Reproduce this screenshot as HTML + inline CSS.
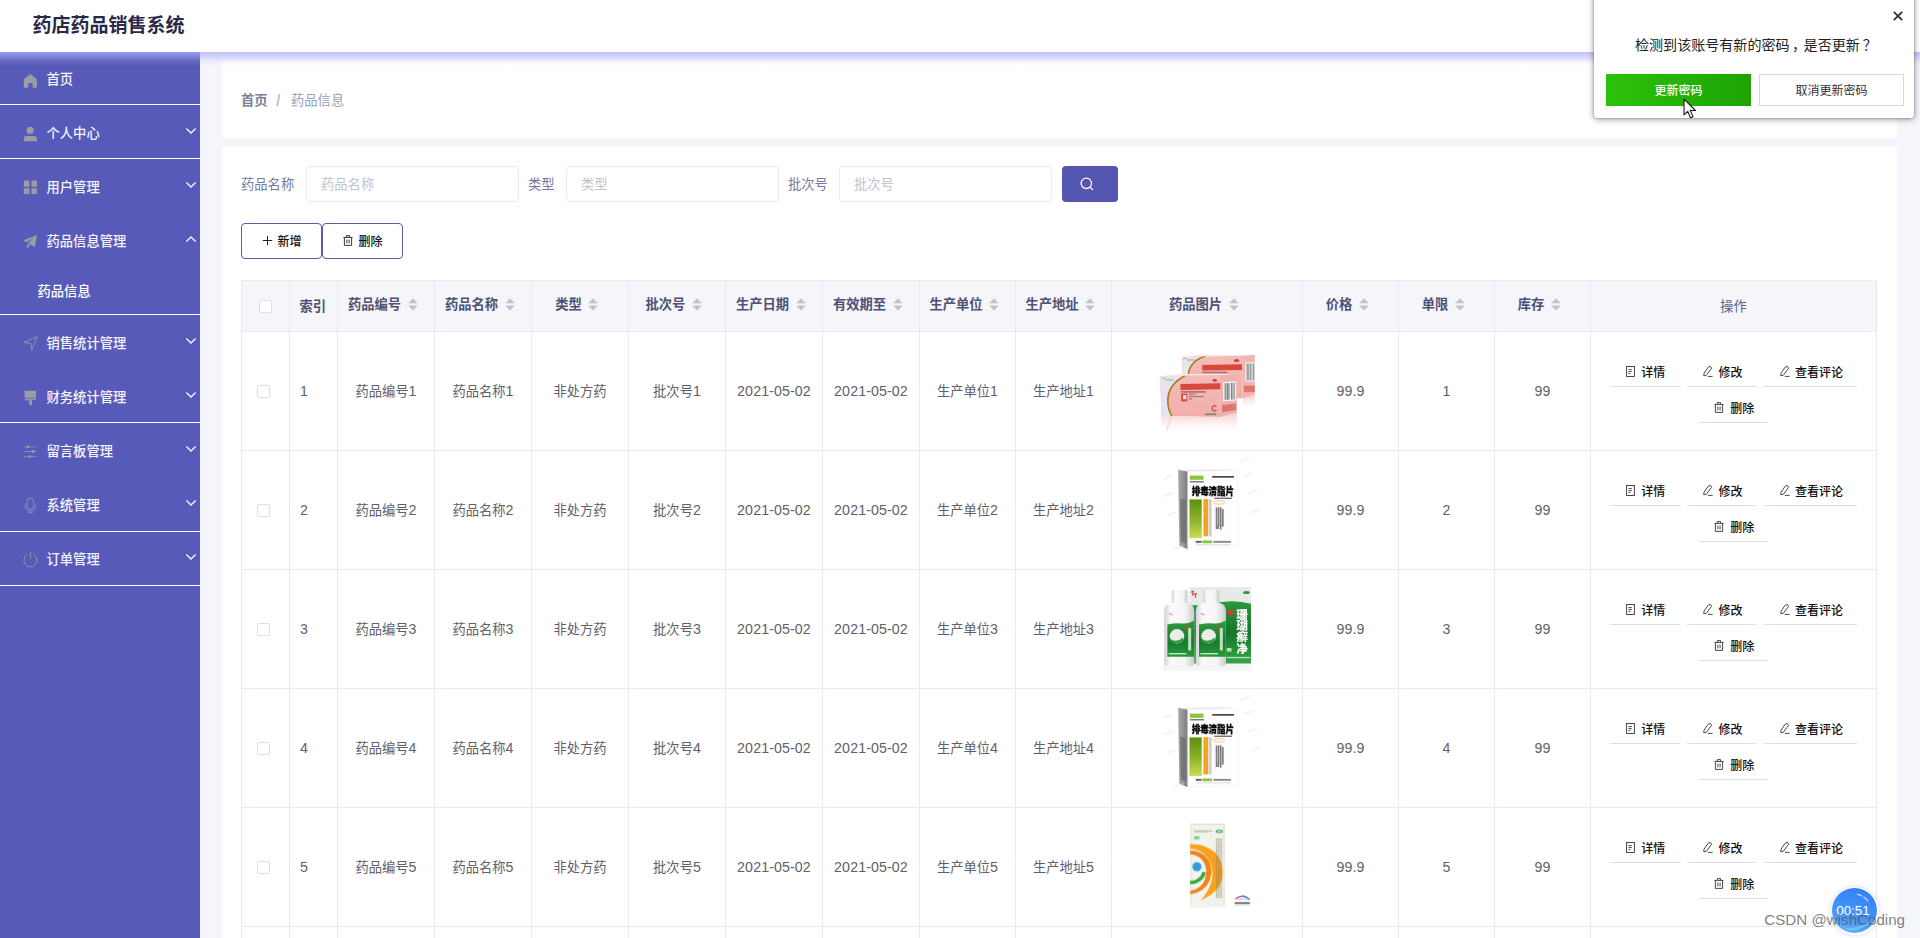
<!DOCTYPE html>
<html lang="zh-CN"><head><meta charset="utf-8"><title>药店药品销售系统</title><style>
*{box-sizing:border-box;margin:0;padding:0}
html,body{width:1920px;height:938px;overflow:hidden}
body{background:#f5f6fb;font-family:"Liberation Sans","Noto Sans CJK SC",sans-serif;font-size:13.3px;color:#606266;position:relative}
.abs{position:absolute}
.t{position:absolute;white-space:nowrap;line-height:20px;height:20px}
.c{transform:translateX(-50%)}
#header{left:0;top:0;width:1920px;height:52px;background:#fff;z-index:5}
#title{left:32.5px;top:10.7px;font-size:19px;font-weight:bold;color:#2a2a48;line-height:30px;height:30px;letter-spacing:0px}
#hshadow{left:0;top:52px;width:1920px;height:14px;z-index:6;background:linear-gradient(to bottom,rgba(176,176,252,.72) 0,rgba(176,176,252,.58) 3px,rgba(176,176,252,.38) 6px,rgba(176,176,252,.18) 9px,rgba(176,176,252,.05) 12px,rgba(176,176,252,0) 14px)}
#side{left:0;top:52px;width:200px;height:886px;background:#575ab8}
.mi{color:#f4f4fc;font-size:13.3px;font-weight:500}
.sl{left:0;width:200px;height:1px;background:#fff}
.card{background:#fff}
.inp{border:1px solid #e9e9f8;border-radius:4px;background:#fff;height:36px;width:213px}
.ph{color:#c0c4cc;font-size:13.3px}
.lab{color:#767aa0;font-size:13.3px}
.btn{border:1px solid #5c5c9e;border-radius:4px;background:#fff;height:36px}
.bt{color:#111;font-size:12px;font-weight:500}
.th{color:#4e5175;font-weight:bold;font-size:13.3px}
.td{color:#5f6166;font-size:13.3px}
.n{font-size:14.2px;letter-spacing:.12px;line-height:0}
.vl{width:1px;background:#e9e9f3}
.hl{height:1px;background:#e9e9f3}
.cb{width:13px;height:13px;border:1px solid #dcdfe6;border-radius:2px;background:#fff}
.ab{height:1px;background:#dcdfe6}
.at{color:#111;font-size:12px;font-weight:500}
svg{position:absolute;overflow:visible}
</style></head><body>
<header>
<div id="header" class="abs"><div id="title" class="t">药店药品销售系统</div></div>
<div id="hshadow" class="abs"></div>
</header>
<nav>
<div id="side" class="abs"></div>
<div class="abs sl" style="top:104px"></div>
<div class="abs sl" style="top:158px"></div>
<div class="abs sl" style="top:314px"></div>
<div class="abs sl" style="top:422px"></div>
<div class="abs sl" style="top:531px"></div>
<div class="abs sl" style="top:585px"></div>
<svg style="left:22px;top:69px" width="16" height="20" viewBox="0 0 16 20"><path d="M8.4 5.1 L14.9 10.3 V18.7 H10.6 V13.9 H6.3 V18.7 H1.8 V10.3 Z" fill="#9a9da3"/></svg>
<div class="t mi" style="left:46.5px;top:70px;">首页</div>
<svg style="left:22px;top:123px" width="16" height="20" viewBox="0 0 16 20"><circle cx="8.1" cy="7.3" r="3.6" fill="#9a9da3"/><path d="M1.8 18.2 V15.4 Q1.8 12.9 4.6 12.9 H12.1 Q14.9 12.9 14.9 15.4 V18.2 Z" fill="#9a9da3"/></svg>
<div class="t mi" style="left:46.5px;top:124px;">个人中心</div>
<svg style="left:185.9px;top:127.5px" width="10" height="7" viewBox="0 0 10 7"><path d="M0.4 0.5 L5 5.1 L9.6 0.5" fill="none" stroke="#f4f4fd" stroke-width="1.4"/></svg>
<svg style="left:22px;top:177px" width="16" height="20" viewBox="0 0 16 20"><g fill="#9a9da3"><rect x="1.8" y="3.6" width="5.6" height="6.1"/><rect x="9.5" y="3.6" width="5.4" height="6.1"/><rect x="1.8" y="11.3" width="5.6" height="5.8"/><rect x="9.5" y="11.3" width="5.4" height="5.8"/></g></svg>
<div class="t mi" style="left:46.5px;top:178px;">用户管理</div>
<svg style="left:185.9px;top:181.5px" width="10" height="7" viewBox="0 0 10 7"><path d="M0.4 0.5 L5 5.1 L9.6 0.5" fill="none" stroke="#f4f4fd" stroke-width="1.4"/></svg>
<svg style="left:22px;top:231px" width="16" height="20" viewBox="0 0 16 20"><path d="M14.9 4.1 L0.9 9.5 L4.8 11.3 L11.9 6.6 L5.9 12.2 L12.9 16 Z M5.1 13 L5.1 18 L8.1 14.6 Z" fill="#9a9da3"/></svg>
<div class="t mi" style="left:46.5px;top:232px;">药品信息管理</div>
<svg style="left:185.9px;top:235.8px" width="10" height="7" viewBox="0 0 10 7"><path d="M0.4 5.6 L5 1 L9.6 5.6" fill="none" stroke="#f4f4fd" stroke-width="1.4"/></svg>
<svg style="left:22px;top:333px" width="16" height="20" viewBox="0 0 16 20"><path d="M15.2 3.7 L1.9 9.4 L9 10.6 L9.7 17.2 Z" fill="none" stroke="#9a9da3" stroke-width="1" stroke-linejoin="round" opacity=".8"/></svg>
<div class="t mi" style="left:46.5px;top:334px;">销售统计管理</div>
<svg style="left:185.9px;top:337.5px" width="10" height="7" viewBox="0 0 10 7"><path d="M0.4 0.5 L5 5.1 L9.6 0.5" fill="none" stroke="#f4f4fd" stroke-width="1.4"/></svg>
<svg style="left:22px;top:387px" width="16" height="20" viewBox="0 0 16 20"><g fill="#9a9da3"><rect x="2.6" y="3.8" width="11.4" height="7"/><path d="M2.8 11.4 H13.8 L13.2 13.3 H3.4 Z"/><path d="M7.1 13.3 H10 V17.3 Q10 18.3 8.55 18.3 Q7.1 18.3 7.1 17.3 Z"/></g></svg>
<div class="t mi" style="left:46.5px;top:388px;">财务统计管理</div>
<svg style="left:185.9px;top:391.5px" width="10" height="7" viewBox="0 0 10 7"><path d="M0.4 0.5 L5 5.1 L9.6 0.5" fill="none" stroke="#f4f4fd" stroke-width="1.4"/></svg>
<svg style="left:22px;top:441px" width="16" height="20" viewBox="0 0 16 20"><g stroke="#9a9da3" stroke-width="1" opacity=".7"><path d="M2 5.9H14.9M2 10.5H14.9M2 15.6H14.9" fill="none"/></g><g fill="#9a9da3"><circle cx="5.7" cy="5.9" r="1.4"/><circle cx="10.9" cy="10.5" r="1.4"/><circle cx="7.8" cy="15.6" r="1.4"/></g></svg>
<div class="t mi" style="left:46.5px;top:442px;">留言板管理</div>
<svg style="left:185.9px;top:445.5px" width="10" height="7" viewBox="0 0 10 7"><path d="M0.4 0.5 L5 5.1 L9.6 0.5" fill="none" stroke="#f4f4fd" stroke-width="1.4"/></svg>
<svg style="left:22px;top:495px" width="16" height="20" viewBox="0 0 16 20"><g stroke="#9a9da3" stroke-width="1" fill="none" opacity=".8"><rect x="5" y="3.2" width="6.7" height="11" rx="3.35"/><path d="M3 10 Q3 15.8 8.4 15.8 Q13.8 15.8 13.8 10"/><path d="M8.4 15.8 V17.7 M5.8 17.7 H11"/></g></svg>
<div class="t mi" style="left:46.5px;top:496px;">系统管理</div>
<svg style="left:185.9px;top:499.5px" width="10" height="7" viewBox="0 0 10 7"><path d="M0.4 0.5 L5 5.1 L9.6 0.5" fill="none" stroke="#f4f4fd" stroke-width="1.4"/></svg>
<svg style="left:22px;top:549px" width="16" height="20" viewBox="0 0 16 20"><g stroke="#9a9da3" stroke-width="1" fill="none" opacity=".85"><path d="M8.7 3.2 V9.7"/><path d="M5.35 5.56 A6.5 6.5 0 1 0 11.45 5.56"/></g></svg>
<div class="t mi" style="left:46.5px;top:550px;">订单管理</div>
<svg style="left:185.9px;top:553.5px" width="10" height="7" viewBox="0 0 10 7"><path d="M0.4 0.5 L5 5.1 L9.6 0.5" fill="none" stroke="#f4f4fd" stroke-width="1.4"/></svg>
<div class="t mi" style="left:37.5px;top:282px;color:#fff">药品信息</div>
</nav>
<main>
<div class="abs card" style="left:222px;top:60px;width:1675px;height:78px"></div>
<div class="abs card" style="left:222px;top:147px;width:1675px;height:791px"></div>
<div class="t " style="left:241px;top:91px;color:#7b7f9d;font-weight:bold;font-size:13.3px">首页</div>
<div class="t " style="left:276px;top:91px;color:#bfc3d2;font-size:16px;font-weight:bold">/</div>
<div class="t " style="left:291px;top:91px;color:#9a9eb6;font-size:13.3px">药品信息</div>
<div class="t lab" style="left:241px;top:175px;">药品名称</div>
<div class="abs inp" style="left:306px;top:166px"></div>
<div class="t ph" style="left:321px;top:175px;">药品名称</div>
<div class="t lab" style="left:528px;top:175px;">类型</div>
<div class="abs inp" style="left:566px;top:166px"></div>
<div class="t ph" style="left:581px;top:175px;">类型</div>
<div class="t lab" style="left:788px;top:175px;">批次号</div>
<div class="abs inp" style="left:839px;top:166px"></div>
<div class="t ph" style="left:854px;top:175px;">批次号</div>
<div class="abs" style="left:1062px;top:166px;width:56px;height:36px;border-radius:4px;background:#5457b2"></div>
<svg style="left:1080px;top:177px" width="14" height="14" viewBox="0 0 14 14"><circle cx="6.3" cy="6.3" r="5.2" fill="none" stroke="#fff" stroke-width="1.3"/><path d="M10 10 L12.6 12.6" stroke="#fff" stroke-width="1.3" stroke-linecap="round"/></svg>
<div class="abs btn" style="left:241px;top:223px;width:81px"></div>
<div class="abs btn" style="left:322px;top:223px;width:81px"></div>
<svg style="left:262px;top:235px" width="11" height="11" viewBox="0 0 11 11"><path d="M5.5 0.8V10.2M0.8 5.5H10.2" stroke="#222" stroke-width="1"/></svg>
<div class="t bt" style="left:277.5px;top:231.5px;">新增</div>
<svg style="left:343px;top:235px" width="10" height="11" viewBox="0 0 10 11"><g fill="none" stroke="#222" stroke-width="0.9"><path d="M0.4 2.4H9.6M3.4 2.2V0.6H6.6V2.2M1.4 2.6V10.4H8.6V2.6M3.9 4.6V8.4M6.1 4.6V8.4"/></g></svg>
<div class="t bt" style="left:358.5px;top:231.5px;">删除</div>
<div class="abs" style="left:241px;top:280px;width:1636px;height:51px;background:#f5f5fa"></div>
<div class="abs vl" style="left:241px;top:280px;height:658px"></div>
<div class="abs vl" style="left:289px;top:280px;height:658px"></div>
<div class="abs vl" style="left:337px;top:280px;height:658px"></div>
<div class="abs vl" style="left:434px;top:280px;height:658px"></div>
<div class="abs vl" style="left:531px;top:280px;height:658px"></div>
<div class="abs vl" style="left:628px;top:280px;height:658px"></div>
<div class="abs vl" style="left:725px;top:280px;height:658px"></div>
<div class="abs vl" style="left:822px;top:280px;height:658px"></div>
<div class="abs vl" style="left:919px;top:280px;height:658px"></div>
<div class="abs vl" style="left:1015px;top:280px;height:658px"></div>
<div class="abs vl" style="left:1111px;top:280px;height:658px"></div>
<div class="abs vl" style="left:1302px;top:280px;height:658px"></div>
<div class="abs vl" style="left:1398px;top:280px;height:658px"></div>
<div class="abs vl" style="left:1494px;top:280px;height:658px"></div>
<div class="abs vl" style="left:1590px;top:280px;height:658px"></div>
<div class="abs vl" style="left:1876px;top:280px;height:658px"></div>
<div class="abs hl" style="left:241px;top:280px;width:1636px"></div>
<div class="abs hl" style="left:241px;top:331px;width:1636px"></div>
<div class="abs hl" style="left:241px;top:450px;width:1636px"></div>
<div class="abs hl" style="left:241px;top:569px;width:1636px"></div>
<div class="abs hl" style="left:241px;top:688px;width:1636px"></div>
<div class="abs hl" style="left:241px;top:807px;width:1636px"></div>
<div class="abs hl" style="left:241px;top:926px;width:1636px"></div>
<div class="abs cb" style="left:259px;top:299.7px"></div>
<div class="t th" style="left:299.5px;top:297.3px;">索引</div>
<div class="t th" style="left:347.9px;top:295.3px;">药品编号</div>
<svg style="left:407.6px;top:298.4px" width="10" height="13" viewBox="0 0 10 13"><path d="M5 0.2 L9.8 5.2 H0.2 Z M0.2 7.4 H9.8 L5 12.4 Z" fill="#c0c4cc"/></svg>
<div class="t th" style="left:444.9px;top:295.3px;">药品名称</div>
<svg style="left:504.6px;top:298.4px" width="10" height="13" viewBox="0 0 10 13"><path d="M5 0.2 L9.8 5.2 H0.2 Z M0.2 7.4 H9.8 L5 12.4 Z" fill="#c0c4cc"/></svg>
<div class="t th" style="left:555.2px;top:295.3px;">类型</div>
<svg style="left:588.3px;top:298.4px" width="10" height="13" viewBox="0 0 10 13"><path d="M5 0.2 L9.8 5.2 H0.2 Z M0.2 7.4 H9.8 L5 12.4 Z" fill="#c0c4cc"/></svg>
<div class="t th" style="left:645.5px;top:295.3px;">批次号</div>
<svg style="left:691.9px;top:298.4px" width="10" height="13" viewBox="0 0 10 13"><path d="M5 0.2 L9.8 5.2 H0.2 Z M0.2 7.4 H9.8 L5 12.4 Z" fill="#c0c4cc"/></svg>
<div class="t th" style="left:735.9px;top:295.3px;">生产日期</div>
<svg style="left:795.6px;top:298.4px" width="10" height="13" viewBox="0 0 10 13"><path d="M5 0.2 L9.8 5.2 H0.2 Z M0.2 7.4 H9.8 L5 12.4 Z" fill="#c0c4cc"/></svg>
<div class="t th" style="left:832.9px;top:295.3px;">有效期至</div>
<svg style="left:892.6px;top:298.4px" width="10" height="13" viewBox="0 0 10 13"><path d="M5 0.2 L9.8 5.2 H0.2 Z M0.2 7.4 H9.8 L5 12.4 Z" fill="#c0c4cc"/></svg>
<div class="t th" style="left:929.4px;top:295.3px;">生产单位</div>
<svg style="left:989.1px;top:298.4px" width="10" height="13" viewBox="0 0 10 13"><path d="M5 0.2 L9.8 5.2 H0.2 Z M0.2 7.4 H9.8 L5 12.4 Z" fill="#c0c4cc"/></svg>
<div class="t th" style="left:1025.4px;top:295.3px;">生产地址</div>
<svg style="left:1085.1px;top:298.4px" width="10" height="13" viewBox="0 0 10 13"><path d="M5 0.2 L9.8 5.2 H0.2 Z M0.2 7.4 H9.8 L5 12.4 Z" fill="#c0c4cc"/></svg>
<div class="t th" style="left:1168.9px;top:295.3px;">药品图片</div>
<svg style="left:1228.6px;top:298.4px" width="10" height="13" viewBox="0 0 10 13"><path d="M5 0.2 L9.8 5.2 H0.2 Z M0.2 7.4 H9.8 L5 12.4 Z" fill="#c0c4cc"/></svg>
<div class="t th" style="left:1325.7px;top:295.3px;">价格</div>
<svg style="left:1358.8px;top:298.4px" width="10" height="13" viewBox="0 0 10 13"><path d="M5 0.2 L9.8 5.2 H0.2 Z M0.2 7.4 H9.8 L5 12.4 Z" fill="#c0c4cc"/></svg>
<div class="t th" style="left:1421.7px;top:295.3px;">单限</div>
<svg style="left:1454.8px;top:298.4px" width="10" height="13" viewBox="0 0 10 13"><path d="M5 0.2 L9.8 5.2 H0.2 Z M0.2 7.4 H9.8 L5 12.4 Z" fill="#c0c4cc"/></svg>
<div class="t th" style="left:1517.7px;top:295.3px;">库存</div>
<svg style="left:1550.8px;top:298.4px" width="10" height="13" viewBox="0 0 10 13"><path d="M5 0.2 L9.8 5.2 H0.2 Z M0.2 7.4 H9.8 L5 12.4 Z" fill="#c0c4cc"/></svg>
<div class="t th c" style="left:1733.5px;top:296.5px;font-weight:normal;color:#5a5f88">操作</div>
<div class="abs cb" style="left:257px;top:385.25px"></div>
<div class="t td" style="left:300px;top:381.75px;"><span class="n">1</span></div>
<div class="t td c" style="left:386.0px;top:381.75px;">药品编号<span class="n">1</span></div>
<div class="t td c" style="left:483.0px;top:381.75px;">药品名称<span class="n">1</span></div>
<div class="t td c" style="left:580.0px;top:381.75px;">非处方药</div>
<div class="t td c" style="left:677.0px;top:381.75px;">批次号<span class="n">1</span></div>
<div class="t td c" style="left:774.0px;top:381.75px;"><span class="n">2021-05-02</span></div>
<div class="t td c" style="left:871.0px;top:381.75px;"><span class="n">2021-05-02</span></div>
<div class="t td c" style="left:967.5px;top:381.75px;">生产单位<span class="n">1</span></div>
<div class="t td c" style="left:1063.5px;top:381.75px;">生产地址<span class="n">1</span></div>
<div class="t td c" style="left:1350.5px;top:381.75px;"><span class="n">99.9</span></div>
<div class="t td c" style="left:1446.5px;top:381.75px;"><span class="n">1</span></div>
<div class="t td c" style="left:1542.5px;top:381.75px;"><span class="n">99</span></div>
<div class="abs ab" style="left:1610px;top:386.0px;width:70px"></div>
<div class="abs ab" style="left:1687px;top:386.0px;width:69px"></div>
<div class="abs ab" style="left:1764px;top:386.0px;width:93px"></div>
<div class="abs ab" style="left:1699px;top:422.0px;width:69px"></div>
<svg style="left:1625.6px;top:366.25px" width="10" height="11" viewBox="0 0 10 11"><g fill="none" stroke="#333" stroke-width="0.9"><rect x="0.6" y="0.5" width="7.8" height="10"/><path d="M2.4 3.6H5.8M2.4 5.6H5.8M2.4 7.6H4.4"/></g></svg>
<div class="t at" style="left:1641.3px;top:362.75px;">详情</div>
<svg style="left:1702.6px;top:366.25px" width="10" height="11" viewBox="0 0 10 11"><g fill="none" stroke="#333" stroke-width="0.9"><path d="M5.2 1.2 L7.4 0.4 L8.6 2.2 L3.4 9.2 L0.8 9.8 L1 7.2 Z"/><path d="M4.8 10.4H9.6"/></g></svg>
<div class="t at" style="left:1718.5px;top:362.75px;">修改</div>
<svg style="left:1779.6px;top:366.25px" width="10" height="11" viewBox="0 0 10 11"><g fill="none" stroke="#333" stroke-width="0.9"><path d="M5.2 1.2 L7.4 0.4 L8.6 2.2 L3.4 9.2 L0.8 9.8 L1 7.2 Z"/><path d="M4.8 10.4H9.6"/></g></svg>
<div class="t at" style="left:1795px;top:362.75px;">查看评论</div>
<svg style="left:1714px;top:402.45px" width="10" height="11" viewBox="0 0 10 11"><g fill="none" stroke="#333" stroke-width="0.9"><path d="M0.4 2.4H9.6M3.4 2.2V0.6H6.6V2.2M1.4 2.6V10.4H8.6V2.6M3.9 4.6V8.4M6.1 4.6V8.4"/></g></svg>
<div class="t at" style="left:1730.2px;top:398.95px;">删除</div>
<svg style="left:1150px;top:335px" width="120" height="110" viewBox="0 0 1023 938"><defs><filter id="b1" x="-5%" y="-5%" width="110%" height="110%"><feGaussianBlur stdDeviation="3.2"/></filter><linearGradient id="pk1" x1="0" y1="0" x2="0" y2="1"><stop offset="0" stop-color="#f4bdb8"/><stop offset="1" stop-color="#f0aeaa"/></linearGradient><linearGradient id="rf1" x1="0" y1="0" x2="0" y2="1"><stop offset="0" stop-color="#f3c0bc" stop-opacity=".8"/><stop offset="1" stop-color="#fff" stop-opacity="0"/></linearGradient><clipPath id="cb1"><polygon points="275,185 785,178 790,540 280,530"/></clipPath><clipPath id="cf1"><polygon points="88,350 600,343 606,700 96,690"/></clipPath></defs><g filter="url(#b1)"><polygon points="275,185 420,168 893,170 785,180" fill="#f7e9ea"/><polygon points="275,185 785,178 790,540 280,530" fill="url(#pk1)"/><g clip-path="url(#cb1)"><path d="M275,185 L470,180 Q330,220 322,345 L275,345 Z" fill="#e9e5ef"/><path d="M470,181 Q335,222 326,345" fill="none" stroke="#a0821c" stroke-width="13"/></g><polygon points="785,178 893,171 893,512 790,540" fill="#efb3b0"/><polygon points="445,256 785,250 785,298 445,302" fill="#d8493c"/><rect x="445" y="312" width="215" height="14" fill="#8a5a60" opacity=".7"/><ellipse cx="738" cy="217" rx="24" ry="13" fill="#d93a3a"/><path d="M285,205 q12,-18 24,0 m6,8 h70" stroke="#7d8b52" stroke-width="6" fill="none"/><rect x="812" y="233" width="82" height="165" fill="#f2f2f2"/><rect x="824" y="243" width="9" height="145" fill="#7f8288"/><rect x="838" y="243" width="6" height="145" fill="#7f8288"/><rect x="850" y="243" width="9" height="145" fill="#7f8288"/><rect x="866" y="243" width="6" height="145" fill="#7f8288"/><rect x="880" y="243" width="9" height="145" fill="#7f8288"/><rect x="800" y="432" width="93" height="55" fill="#d9685c" opacity=".8"/><polygon points="88,350 235,332 740,335 600,343" fill="#f8ecec"/><polygon points="88,350 600,343 606,700 96,690" fill="url(#pk1)"/><g clip-path="url(#cf1)"><path d="M88,350 L300,346 Q150,420 150,560 Q150,640 190,700 L90,700 Z" fill="#e6e3ee"/><path d="M300,347 Q152,420 152,560 Q152,640 190,698" fill="none" stroke="#a0821c" stroke-width="14"/></g><polygon points="600,343 740,335 740,662 606,700" fill="#efb1ae"/><polygon points="260,417 600,411 600,463 260,468" fill="#d8493c"/><rect x="262" y="478" width="215" height="14" fill="#8a5a60" opacity=".75"/><rect x="265" y="500" width="53" height="66" fill="#d9483a"/><rect x="282" y="512" width="28" height="36" fill="#f8dcd8"/><rect x="330" y="500" width="60" height="10" fill="#8a5a60" opacity=".7"/><rect x="330" y="520" width="130" height="10" fill="#8a5a60" opacity=".7"/><rect x="330" y="540" width="30" height="10" fill="#8a5a60" opacity=".7"/><ellipse cx="552" cy="387" rx="20" ry="11" fill="#d93a3a"/><path d="M108,375 q12,-18 24,0 m6,8 h62" stroke="#7d8b52" stroke-width="6" fill="none"/><path d="M565,612 a20,22 0 1 0 0,26" fill="none" stroke="#d8493c" stroke-width="11"/><rect x="470" y="668" width="95" height="16" fill="#6f7a55" opacity=".8"/><rect x="622" y="400" width="112" height="165" fill="#f2f2f2" transform="skewY(-3) translate(0,33)"/><rect x="636" y="412" width="10" height="142" fill="#7f8288" transform="skewY(-3) translate(0,33)"/><rect x="652" y="412" width="14" height="142" fill="#7f8288" transform="skewY(-3) translate(0,33)"/><rect x="668" y="412" width="10" height="142" fill="#7f8288" transform="skewY(-3) translate(0,33)"/><rect x="690" y="412" width="14" height="142" fill="#7f8288" transform="skewY(-3) translate(0,33)"/><rect x="712" y="412" width="10" height="142" fill="#7f8288" transform="skewY(-3) translate(0,33)"/><polygon points="614,600 735,585 735,640 616,660" fill="#d9685c" opacity=".8"/><polygon points="96,692 606,702 740,664 740,800 606,850 100,840" fill="url(#rf1)"/><polygon points="790,542 893,514 893,600 790,640" fill="url(#rf1)"/><path d="M188,700 Q150,760 140,820" stroke="#b59a3a" stroke-width="9" fill="none" opacity=".3"/></g></svg>
<div class="abs cb" style="left:257px;top:504.25px"></div>
<div class="t td" style="left:300px;top:500.75px;"><span class="n">2</span></div>
<div class="t td c" style="left:386.0px;top:500.75px;">药品编号<span class="n">2</span></div>
<div class="t td c" style="left:483.0px;top:500.75px;">药品名称<span class="n">2</span></div>
<div class="t td c" style="left:580.0px;top:500.75px;">非处方药</div>
<div class="t td c" style="left:677.0px;top:500.75px;">批次号<span class="n">2</span></div>
<div class="t td c" style="left:774.0px;top:500.75px;"><span class="n">2021-05-02</span></div>
<div class="t td c" style="left:871.0px;top:500.75px;"><span class="n">2021-05-02</span></div>
<div class="t td c" style="left:967.5px;top:500.75px;">生产单位<span class="n">2</span></div>
<div class="t td c" style="left:1063.5px;top:500.75px;">生产地址<span class="n">2</span></div>
<div class="t td c" style="left:1350.5px;top:500.75px;"><span class="n">99.9</span></div>
<div class="t td c" style="left:1446.5px;top:500.75px;"><span class="n">2</span></div>
<div class="t td c" style="left:1542.5px;top:500.75px;"><span class="n">99</span></div>
<div class="abs ab" style="left:1610px;top:505.0px;width:70px"></div>
<div class="abs ab" style="left:1687px;top:505.0px;width:69px"></div>
<div class="abs ab" style="left:1764px;top:505.0px;width:93px"></div>
<div class="abs ab" style="left:1699px;top:541.0px;width:69px"></div>
<svg style="left:1625.6px;top:485.25px" width="10" height="11" viewBox="0 0 10 11"><g fill="none" stroke="#333" stroke-width="0.9"><rect x="0.6" y="0.5" width="7.8" height="10"/><path d="M2.4 3.6H5.8M2.4 5.6H5.8M2.4 7.6H4.4"/></g></svg>
<div class="t at" style="left:1641.3px;top:481.75px;">详情</div>
<svg style="left:1702.6px;top:485.25px" width="10" height="11" viewBox="0 0 10 11"><g fill="none" stroke="#333" stroke-width="0.9"><path d="M5.2 1.2 L7.4 0.4 L8.6 2.2 L3.4 9.2 L0.8 9.8 L1 7.2 Z"/><path d="M4.8 10.4H9.6"/></g></svg>
<div class="t at" style="left:1718.5px;top:481.75px;">修改</div>
<svg style="left:1779.6px;top:485.25px" width="10" height="11" viewBox="0 0 10 11"><g fill="none" stroke="#333" stroke-width="0.9"><path d="M5.2 1.2 L7.4 0.4 L8.6 2.2 L3.4 9.2 L0.8 9.8 L1 7.2 Z"/><path d="M4.8 10.4H9.6"/></g></svg>
<div class="t at" style="left:1795px;top:481.75px;">查看评论</div>
<svg style="left:1714px;top:521.45px" width="10" height="11" viewBox="0 0 10 11"><g fill="none" stroke="#333" stroke-width="0.9"><path d="M0.4 2.4H9.6M3.4 2.2V0.6H6.6V2.2M1.4 2.6V10.4H8.6V2.6M3.9 4.6V8.4M6.1 4.6V8.4"/></g></svg>
<div class="t at" style="left:1730.2px;top:517.95px;">删除</div>
<svg style="left:1150px;top:454px" width="120" height="110" viewBox="0 0 1023 938"><defs><filter id="b2" x="-5%" y="-5%" width="110%" height="110%"><feGaussianBlur stdDeviation="3.2"/></filter><linearGradient id="gr2" x1="0" y1="0" x2="0" y2="1"><stop offset="0" stop-color="#5d8e17"/><stop offset=".55" stop-color="#8db52a"/><stop offset="1" stop-color="#cddb52"/></linearGradient><linearGradient id="sd2" x1="0" y1="0" x2="1" y2="0"><stop offset="0" stop-color="#a9a9a9"/><stop offset="1" stop-color="#7d7d7d"/></linearGradient></defs><g filter="url(#b2)"><polygon points="240,135 322,150 322,812 250,782" fill="url(#sd2)"/><polygon points="258,380 305,392 305,760 262,745" fill="#5e5e5e" opacity=".55"/><polygon points="240,135 322,150 745,140 660,128" fill="#ededed"/><polygon points="322,150 745,140 750,790 322,812" fill="#fefefe" stroke="#e6e6e6" stroke-width="3"/><rect x="340" y="184" width="116" height="36" fill="#8bc53f"/><rect x="340" y="232" width="120" height="10" fill="#333" opacity=".8"/><rect x="530" y="189" width="186" height="12" fill="#222"/><text x="355" y="348" font-family="'Liberation Sans','Noto Sans CJK SC',sans-serif" font-weight="900" font-size="84" textLength="362" lengthAdjust="spacingAndGlyphs" fill="#111" stroke="#111" stroke-width="2.5">排毒清脂片</text><rect x="548" y="372" width="150" height="11" fill="#333" opacity=".75"/><rect x="332" y="383" width="112" height="335" fill="#f2ee7a"/><rect x="338" y="388" width="102" height="327" fill="url(#gr2)"/><rect x="455" y="385" width="41" height="317" fill="#f5a31b"/><rect x="500" y="385" width="26" height="317" fill="#cfcfd2"/><rect x="546" y="400" width="86" height="26" rx="8" fill="#fff" stroke="#f0a63a" stroke-width="5"/><rect x="560" y="455" width="14" height="185" fill="#444" opacity=".7"/><rect x="578" y="455" width="14" height="160" fill="#444" opacity=".7"/><rect x="596" y="455" width="14" height="190" fill="#444" opacity=".7"/><rect x="614" y="470" width="14" height="150" fill="#444" opacity=".7"/><rect x="575" y="610" width="14" height="30" fill="#444" opacity=".7"/><rect x="390" y="741" width="50" height="16" fill="#333" opacity=".8"/><rect x="447" y="737" width="82" height="24" fill="#8bc53f"/><rect x="540" y="741" width="150" height="16" fill="#555" opacity=".7"/><rect x="390" y="772" width="300" height="6" fill="#9aa" opacity=".6"/><rect x="100" y="210" width="90" height="22" fill="#dcdcdc" opacity=".28" transform="rotate(-20 100 210)"/><rect x="120" y="350" width="90" height="22" fill="#dcdcdc" opacity=".28" transform="rotate(-20 120 350)"/><rect x="150" y="510" width="90" height="22" fill="#dcdcdc" opacity=".28" transform="rotate(-20 150 510)"/><rect x="200" y="800" width="90" height="22" fill="#dcdcdc" opacity=".28" transform="rotate(-20 200 800)"/><rect x="760" y="60" width="90" height="22" fill="#dcdcdc" opacity=".28" transform="rotate(-20 760 60)"/><rect x="790" y="180" width="90" height="22" fill="#dcdcdc" opacity=".28" transform="rotate(-20 790 180)"/><rect x="830" y="330" width="90" height="22" fill="#dcdcdc" opacity=".28" transform="rotate(-20 830 330)"/><rect x="860" y="490" width="90" height="22" fill="#dcdcdc" opacity=".28" transform="rotate(-20 860 490)"/></g></svg>
<div class="abs cb" style="left:257px;top:623.25px"></div>
<div class="t td" style="left:300px;top:619.75px;"><span class="n">3</span></div>
<div class="t td c" style="left:386.0px;top:619.75px;">药品编号<span class="n">3</span></div>
<div class="t td c" style="left:483.0px;top:619.75px;">药品名称<span class="n">3</span></div>
<div class="t td c" style="left:580.0px;top:619.75px;">非处方药</div>
<div class="t td c" style="left:677.0px;top:619.75px;">批次号<span class="n">3</span></div>
<div class="t td c" style="left:774.0px;top:619.75px;"><span class="n">2021-05-02</span></div>
<div class="t td c" style="left:871.0px;top:619.75px;"><span class="n">2021-05-02</span></div>
<div class="t td c" style="left:967.5px;top:619.75px;">生产单位<span class="n">3</span></div>
<div class="t td c" style="left:1063.5px;top:619.75px;">生产地址<span class="n">3</span></div>
<div class="t td c" style="left:1350.5px;top:619.75px;"><span class="n">99.9</span></div>
<div class="t td c" style="left:1446.5px;top:619.75px;"><span class="n">3</span></div>
<div class="t td c" style="left:1542.5px;top:619.75px;"><span class="n">99</span></div>
<div class="abs ab" style="left:1610px;top:624.0px;width:70px"></div>
<div class="abs ab" style="left:1687px;top:624.0px;width:69px"></div>
<div class="abs ab" style="left:1764px;top:624.0px;width:93px"></div>
<div class="abs ab" style="left:1699px;top:660.0px;width:69px"></div>
<svg style="left:1625.6px;top:604.25px" width="10" height="11" viewBox="0 0 10 11"><g fill="none" stroke="#333" stroke-width="0.9"><rect x="0.6" y="0.5" width="7.8" height="10"/><path d="M2.4 3.6H5.8M2.4 5.6H5.8M2.4 7.6H4.4"/></g></svg>
<div class="t at" style="left:1641.3px;top:600.75px;">详情</div>
<svg style="left:1702.6px;top:604.25px" width="10" height="11" viewBox="0 0 10 11"><g fill="none" stroke="#333" stroke-width="0.9"><path d="M5.2 1.2 L7.4 0.4 L8.6 2.2 L3.4 9.2 L0.8 9.8 L1 7.2 Z"/><path d="M4.8 10.4H9.6"/></g></svg>
<div class="t at" style="left:1718.5px;top:600.75px;">修改</div>
<svg style="left:1779.6px;top:604.25px" width="10" height="11" viewBox="0 0 10 11"><g fill="none" stroke="#333" stroke-width="0.9"><path d="M5.2 1.2 L7.4 0.4 L8.6 2.2 L3.4 9.2 L0.8 9.8 L1 7.2 Z"/><path d="M4.8 10.4H9.6"/></g></svg>
<div class="t at" style="left:1795px;top:600.75px;">查看评论</div>
<svg style="left:1714px;top:640.45px" width="10" height="11" viewBox="0 0 10 11"><g fill="none" stroke="#333" stroke-width="0.9"><path d="M0.4 2.4H9.6M3.4 2.2V0.6H6.6V2.2M1.4 2.6V10.4H8.6V2.6M3.9 4.6V8.4M6.1 4.6V8.4"/></g></svg>
<div class="t at" style="left:1730.2px;top:636.95px;">删除</div>
<svg style="left:1150px;top:573px" width="120" height="110" viewBox="0 0 1023 938"><defs><filter id="b3" x="-5%" y="-5%" width="110%" height="110%"><feGaussianBlur stdDeviation="3.2"/></filter><linearGradient id="gb3" x1="0" y1="0" x2="0" y2="1"><stop offset="0" stop-color="#2d9a3c"/><stop offset=".5" stop-color="#13762a"/><stop offset="1" stop-color="#36a544"/></linearGradient><linearGradient id="bt3" x1="0" y1="0" x2="1" y2="0"><stop offset="0" stop-color="#cfd1d3"/><stop offset=".22" stop-color="#fafafa"/><stop offset=".7" stop-color="#f4f4f4"/><stop offset="1" stop-color="#c9cbcd"/></linearGradient><linearGradient id="lb3" x1="0" y1="0" x2="0" y2="1"><stop offset="0" stop-color="#2f9d3e"/><stop offset=".6" stop-color="#167c2c"/><stop offset="1" stop-color="#2a9a3c"/></linearGradient></defs><g filter="url(#b3)"><rect x="110" y="778" width="760" height="55" fill="#ececec" opacity=".55"/><rect x="335" y="120" width="526" height="652" fill="#e8eae7"/><path d="M335,270 Q420,285 520,262 T700,240 T861,262 V772 H335 Z" fill="url(#gb3)"/><ellipse cx="822" cy="167" rx="29" ry="13" fill="#2f9a4a"/><path d="M348,165 l22,-8 l-6,30 l30,-12 l-10,38" stroke="#d63a3a" stroke-width="9" fill="none"/><rect x="665" y="315" width="52" height="42" fill="#d23b35"/><text transform="translate(738,388)" font-family="'Liberation Sans','Noto Sans CJK SC',sans-serif" font-weight="bold" font-size="96" fill="#fff" stroke="#fff" stroke-width="2"><tspan x="0" y="0">珊</tspan><tspan x="0" y="98">瑚</tspan><tspan x="0" y="196">癣</tspan><tspan x="0" y="294">净</tspan></text><rect x="650" y="320" width="0" height="0"/><rect x="655" y="640" width="40" height="30" fill="#e8f3e8" opacity=".8"/><rect x="655" y="715" width="200" height="12" fill="#e8f3e8" opacity=".75"/><rect x="185" y="145" width="136" height="135" rx="10" fill="url(#bt3)"/><path d="M120,330 Q120,262 180,255 H320 Q378,262 378,330 V760 Q378,792 350,792 H150 Q120,792 120,760 Z" fill="url(#bt3)"/><path d="M148,440 Q210,425 270,430 T376,405 V715 H148 Z" fill="url(#lb3)"/><circle cx="230" cy="540" r="62" fill="#e9efe6"/><path d="M172,560 q50,40 110,-10 v30 q-50,40 -110,5 Z" fill="#3c9a46"/><rect x="290" y="455" width="24" height="24" fill="#c0483c"/><rect x="325" y="470" width="26" height="190" fill="#e9f5e9" opacity=".8"/><rect x="160" y="682" width="150" height="12" fill="#e6f2e6" opacity=".85"/><path d="M162,340 l10,14 l8,-10 l10,20" stroke="#d96a78" stroke-width="6" fill="none"/><rect x="455" y="145" width="136" height="135" rx="10" fill="url(#bt3)"/><path d="M390,330 Q390,262 450,255 H590 Q648,262 648,330 V760 Q648,792 620,792 H420 Q390,792 390,760 Z" fill="url(#bt3)"/><path d="M418,440 Q480,425 540,430 T646,405 V715 H418 Z" fill="url(#lb3)"/><circle cx="500" cy="540" r="62" fill="#e9efe6"/><path d="M442,560 q50,40 110,-10 v30 q-50,40 -110,5 Z" fill="#3c9a46"/><rect x="560" y="455" width="24" height="24" fill="#c0483c"/><rect x="595" y="470" width="26" height="190" fill="#e9f5e9" opacity=".8"/><rect x="430" y="682" width="150" height="12" fill="#e6f2e6" opacity=".85"/><path d="M432,340 l10,14 l8,-10 l10,20" stroke="#d96a78" stroke-width="6" fill="none"/></g></svg>
<div class="abs cb" style="left:257px;top:742.25px"></div>
<div class="t td" style="left:300px;top:738.75px;"><span class="n">4</span></div>
<div class="t td c" style="left:386.0px;top:738.75px;">药品编号<span class="n">4</span></div>
<div class="t td c" style="left:483.0px;top:738.75px;">药品名称<span class="n">4</span></div>
<div class="t td c" style="left:580.0px;top:738.75px;">非处方药</div>
<div class="t td c" style="left:677.0px;top:738.75px;">批次号<span class="n">4</span></div>
<div class="t td c" style="left:774.0px;top:738.75px;"><span class="n">2021-05-02</span></div>
<div class="t td c" style="left:871.0px;top:738.75px;"><span class="n">2021-05-02</span></div>
<div class="t td c" style="left:967.5px;top:738.75px;">生产单位<span class="n">4</span></div>
<div class="t td c" style="left:1063.5px;top:738.75px;">生产地址<span class="n">4</span></div>
<div class="t td c" style="left:1350.5px;top:738.75px;"><span class="n">99.9</span></div>
<div class="t td c" style="left:1446.5px;top:738.75px;"><span class="n">4</span></div>
<div class="t td c" style="left:1542.5px;top:738.75px;"><span class="n">99</span></div>
<div class="abs ab" style="left:1610px;top:743.0px;width:70px"></div>
<div class="abs ab" style="left:1687px;top:743.0px;width:69px"></div>
<div class="abs ab" style="left:1764px;top:743.0px;width:93px"></div>
<div class="abs ab" style="left:1699px;top:779.0px;width:69px"></div>
<svg style="left:1625.6px;top:723.25px" width="10" height="11" viewBox="0 0 10 11"><g fill="none" stroke="#333" stroke-width="0.9"><rect x="0.6" y="0.5" width="7.8" height="10"/><path d="M2.4 3.6H5.8M2.4 5.6H5.8M2.4 7.6H4.4"/></g></svg>
<div class="t at" style="left:1641.3px;top:719.75px;">详情</div>
<svg style="left:1702.6px;top:723.25px" width="10" height="11" viewBox="0 0 10 11"><g fill="none" stroke="#333" stroke-width="0.9"><path d="M5.2 1.2 L7.4 0.4 L8.6 2.2 L3.4 9.2 L0.8 9.8 L1 7.2 Z"/><path d="M4.8 10.4H9.6"/></g></svg>
<div class="t at" style="left:1718.5px;top:719.75px;">修改</div>
<svg style="left:1779.6px;top:723.25px" width="10" height="11" viewBox="0 0 10 11"><g fill="none" stroke="#333" stroke-width="0.9"><path d="M5.2 1.2 L7.4 0.4 L8.6 2.2 L3.4 9.2 L0.8 9.8 L1 7.2 Z"/><path d="M4.8 10.4H9.6"/></g></svg>
<div class="t at" style="left:1795px;top:719.75px;">查看评论</div>
<svg style="left:1714px;top:759.45px" width="10" height="11" viewBox="0 0 10 11"><g fill="none" stroke="#333" stroke-width="0.9"><path d="M0.4 2.4H9.6M3.4 2.2V0.6H6.6V2.2M1.4 2.6V10.4H8.6V2.6M3.9 4.6V8.4M6.1 4.6V8.4"/></g></svg>
<div class="t at" style="left:1730.2px;top:755.95px;">删除</div>
<svg style="left:1150px;top:692px" width="120" height="110" viewBox="0 0 1023 938"><defs><filter id="b4" x="-5%" y="-5%" width="110%" height="110%"><feGaussianBlur stdDeviation="3.2"/></filter><linearGradient id="gr4" x1="0" y1="0" x2="0" y2="1"><stop offset="0" stop-color="#5d8e17"/><stop offset=".55" stop-color="#8db52a"/><stop offset="1" stop-color="#cddb52"/></linearGradient><linearGradient id="sd4" x1="0" y1="0" x2="1" y2="0"><stop offset="0" stop-color="#a9a9a9"/><stop offset="1" stop-color="#7d7d7d"/></linearGradient></defs><g filter="url(#b4)"><polygon points="240,135 322,150 322,812 250,782" fill="url(#sd4)"/><polygon points="258,380 305,392 305,760 262,745" fill="#5e5e5e" opacity=".55"/><polygon points="240,135 322,150 745,140 660,128" fill="#ededed"/><polygon points="322,150 745,140 750,790 322,812" fill="#fefefe" stroke="#e6e6e6" stroke-width="3"/><rect x="340" y="184" width="116" height="36" fill="#8bc53f"/><rect x="340" y="232" width="120" height="10" fill="#333" opacity=".8"/><rect x="530" y="189" width="186" height="12" fill="#222"/><text x="355" y="348" font-family="'Liberation Sans','Noto Sans CJK SC',sans-serif" font-weight="900" font-size="84" textLength="362" lengthAdjust="spacingAndGlyphs" fill="#111" stroke="#111" stroke-width="2.5">排毒清脂片</text><rect x="548" y="372" width="150" height="11" fill="#333" opacity=".75"/><rect x="332" y="383" width="112" height="335" fill="#f2ee7a"/><rect x="338" y="388" width="102" height="327" fill="url(#gr4)"/><rect x="455" y="385" width="41" height="317" fill="#f5a31b"/><rect x="500" y="385" width="26" height="317" fill="#cfcfd2"/><rect x="546" y="400" width="86" height="26" rx="8" fill="#fff" stroke="#f0a63a" stroke-width="5"/><rect x="560" y="455" width="14" height="185" fill="#444" opacity=".7"/><rect x="578" y="455" width="14" height="160" fill="#444" opacity=".7"/><rect x="596" y="455" width="14" height="190" fill="#444" opacity=".7"/><rect x="614" y="470" width="14" height="150" fill="#444" opacity=".7"/><rect x="575" y="610" width="14" height="30" fill="#444" opacity=".7"/><rect x="390" y="741" width="50" height="16" fill="#333" opacity=".8"/><rect x="447" y="737" width="82" height="24" fill="#8bc53f"/><rect x="540" y="741" width="150" height="16" fill="#555" opacity=".7"/><rect x="390" y="772" width="300" height="6" fill="#9aa" opacity=".6"/><rect x="100" y="210" width="90" height="22" fill="#dcdcdc" opacity=".28" transform="rotate(-20 100 210)"/><rect x="120" y="350" width="90" height="22" fill="#dcdcdc" opacity=".28" transform="rotate(-20 120 350)"/><rect x="150" y="510" width="90" height="22" fill="#dcdcdc" opacity=".28" transform="rotate(-20 150 510)"/><rect x="200" y="800" width="90" height="22" fill="#dcdcdc" opacity=".28" transform="rotate(-20 200 800)"/><rect x="760" y="60" width="90" height="22" fill="#dcdcdc" opacity=".28" transform="rotate(-20 760 60)"/><rect x="790" y="180" width="90" height="22" fill="#dcdcdc" opacity=".28" transform="rotate(-20 790 180)"/><rect x="830" y="330" width="90" height="22" fill="#dcdcdc" opacity=".28" transform="rotate(-20 830 330)"/><rect x="860" y="490" width="90" height="22" fill="#dcdcdc" opacity=".28" transform="rotate(-20 860 490)"/></g></svg>
<div class="abs cb" style="left:257px;top:861.25px"></div>
<div class="t td" style="left:300px;top:857.75px;"><span class="n">5</span></div>
<div class="t td c" style="left:386.0px;top:857.75px;">药品编号<span class="n">5</span></div>
<div class="t td c" style="left:483.0px;top:857.75px;">药品名称<span class="n">5</span></div>
<div class="t td c" style="left:580.0px;top:857.75px;">非处方药</div>
<div class="t td c" style="left:677.0px;top:857.75px;">批次号<span class="n">5</span></div>
<div class="t td c" style="left:774.0px;top:857.75px;"><span class="n">2021-05-02</span></div>
<div class="t td c" style="left:871.0px;top:857.75px;"><span class="n">2021-05-02</span></div>
<div class="t td c" style="left:967.5px;top:857.75px;">生产单位<span class="n">5</span></div>
<div class="t td c" style="left:1063.5px;top:857.75px;">生产地址<span class="n">5</span></div>
<div class="t td c" style="left:1350.5px;top:857.75px;"><span class="n">99.9</span></div>
<div class="t td c" style="left:1446.5px;top:857.75px;"><span class="n">5</span></div>
<div class="t td c" style="left:1542.5px;top:857.75px;"><span class="n">99</span></div>
<div class="abs ab" style="left:1610px;top:862.0px;width:70px"></div>
<div class="abs ab" style="left:1687px;top:862.0px;width:69px"></div>
<div class="abs ab" style="left:1764px;top:862.0px;width:93px"></div>
<div class="abs ab" style="left:1699px;top:898.0px;width:69px"></div>
<svg style="left:1625.6px;top:842.25px" width="10" height="11" viewBox="0 0 10 11"><g fill="none" stroke="#333" stroke-width="0.9"><rect x="0.6" y="0.5" width="7.8" height="10"/><path d="M2.4 3.6H5.8M2.4 5.6H5.8M2.4 7.6H4.4"/></g></svg>
<div class="t at" style="left:1641.3px;top:838.75px;">详情</div>
<svg style="left:1702.6px;top:842.25px" width="10" height="11" viewBox="0 0 10 11"><g fill="none" stroke="#333" stroke-width="0.9"><path d="M5.2 1.2 L7.4 0.4 L8.6 2.2 L3.4 9.2 L0.8 9.8 L1 7.2 Z"/><path d="M4.8 10.4H9.6"/></g></svg>
<div class="t at" style="left:1718.5px;top:838.75px;">修改</div>
<svg style="left:1779.6px;top:842.25px" width="10" height="11" viewBox="0 0 10 11"><g fill="none" stroke="#333" stroke-width="0.9"><path d="M5.2 1.2 L7.4 0.4 L8.6 2.2 L3.4 9.2 L0.8 9.8 L1 7.2 Z"/><path d="M4.8 10.4H9.6"/></g></svg>
<div class="t at" style="left:1795px;top:838.75px;">查看评论</div>
<svg style="left:1714px;top:878.45px" width="10" height="11" viewBox="0 0 10 11"><g fill="none" stroke="#333" stroke-width="0.9"><path d="M0.4 2.4H9.6M3.4 2.2V0.6H6.6V2.2M1.4 2.6V10.4H8.6V2.6M3.9 4.6V8.4M6.1 4.6V8.4"/></g></svg>
<div class="t at" style="left:1730.2px;top:874.95px;">删除</div>
<svg style="left:1150px;top:811px" width="120" height="110" viewBox="0 0 1023 938"><defs><filter id="b5" x="-5%" y="-5%" width="110%" height="110%"><feGaussianBlur stdDeviation="3.2"/></filter><clipPath id="ob5"><rect x="342" y="112" width="298" height="690"/></clipPath><linearGradient id="os5" x1="0" y1="0" x2="0" y2="1"><stop offset="0" stop-color="#e4e4de" stop-opacity=".8"/><stop offset="1" stop-color="#fff" stop-opacity="0"/></linearGradient><linearGradient id="og5" x1="0" y1="0" x2="1" y2="0"><stop offset="0" stop-color="#e9eadf"/><stop offset=".1" stop-color="#f3f4ec"/><stop offset=".9" stop-color="#f1f2e9"/><stop offset="1" stop-color="#e4e5da"/></linearGradient></defs><g filter="url(#b5)"><rect x="342" y="800" width="298" height="50" fill="url(#os5)"/><rect x="342" y="112" width="298" height="690" fill="url(#og5)"/><rect x="342" y="108" width="298" height="8" fill="#d9d9d0"/><g clip-path="url(#ob5)"><path d="M342,283 Q470,275 560,360 Q640,450 615,580 Q585,700 432,760 Q505,685 528,585 Q548,478 488,394 Q432,326 342,322 Z" fill="#f9a21d"/><path d="M342,336 Q440,335 495,410 Q545,490 510,590 Q470,690 342,712 V682 Q440,665 470,580 Q495,490 455,430 Q415,372 342,370 Z" fill="#ef861f"/><path d="M342,608 A113,113 0 0 0 462,520" fill="none" stroke="#3aab3a" stroke-width="30"/><circle cx="400" cy="475" r="39" fill="#2e9fd9"/></g><rect x="375" y="166" width="158" height="8" fill="#9a9a94" opacity=".8"/><rect x="375" y="180" width="120" height="6" fill="#aaa" opacity=".7"/><ellipse cx="590" cy="174" rx="30" ry="14" fill="#3f9f6a"/><ellipse cx="590" cy="174" rx="16" ry="6" fill="#dfeee2"/><rect x="375" y="215" width="46" height="26" fill="#7fc97f"/><rect x="566" y="238" width="42" height="40" fill="none" stroke="#8c7f63" stroke-width="7" opacity=".62"/><path d="M570,258 h34 M587,241 v34" stroke="#8c7f63" stroke-width="6" opacity=".55"/><rect x="566" y="289" width="42" height="40" fill="none" stroke="#8c7f63" stroke-width="7" opacity=".62"/><path d="M570,309 h34 M587,292 v34" stroke="#8c7f63" stroke-width="6" opacity=".55"/><rect x="566" y="340" width="42" height="40" fill="none" stroke="#8c7f63" stroke-width="7" opacity=".62"/><path d="M570,360 h34 M587,343 v34" stroke="#8c7f63" stroke-width="6" opacity=".55"/><rect x="566" y="391" width="42" height="40" fill="none" stroke="#8c7f63" stroke-width="7" opacity=".62"/><path d="M570,411 h34 M587,394 v34" stroke="#8c7f63" stroke-width="6" opacity=".55"/><rect x="566" y="442" width="42" height="40" fill="none" stroke="#8c7f63" stroke-width="7" opacity=".62"/><path d="M570,462 h34 M587,445 v34" stroke="#8c7f63" stroke-width="6" opacity=".55"/><rect x="566" y="493" width="42" height="40" fill="none" stroke="#8c7f63" stroke-width="7" opacity=".62"/><path d="M570,513 h34 M587,496 v34" stroke="#8c7f63" stroke-width="6" opacity=".55"/><rect x="566" y="544" width="42" height="40" fill="none" stroke="#8c7f63" stroke-width="7" opacity=".62"/><path d="M570,564 h34 M587,547 v34" stroke="#8c7f63" stroke-width="6" opacity=".55"/><rect x="566" y="595" width="42" height="40" fill="none" stroke="#8c7f63" stroke-width="7" opacity=".62"/><path d="M570,615 h34 M587,598 v34" stroke="#8c7f63" stroke-width="6" opacity=".55"/><rect x="566" y="646" width="42" height="40" fill="none" stroke="#8c7f63" stroke-width="7" opacity=".62"/><path d="M570,666 h34 M587,649 v34" stroke="#8c7f63" stroke-width="6" opacity=".55"/><rect x="566" y="697" width="42" height="40" fill="none" stroke="#8c7f63" stroke-width="7" opacity=".62"/><path d="M570,717 h34 M587,700 v34" stroke="#8c7f63" stroke-width="6" opacity=".55"/><path d="M728,752 Q785,700 845,752" fill="none" stroke="#c2369a" stroke-width="11"/><path d="M790,722 Q825,728 848,756" fill="none" stroke="#3a7fd0" stroke-width="11"/><path d="M752,758 Q787,735 822,758" fill="none" stroke="#6cc7c0" stroke-width="7"/><rect x="722" y="776" width="130" height="18" fill="#555" opacity=".75"/><rect x="722" y="800" width="130" height="5" fill="#999" opacity=".6"/></g></svg>
</main>
<aside>
<div class="abs" style="left:1594px;top:-6px;width:320px;height:124px;background:#fff;border-radius:3px;box-shadow:0 1px 6px rgba(0,0,0,.45),0 0 2px rgba(0,0,0,.32);z-index:20"></div>
<div class="abs" style="left:1606px;top:74px;width:145px;height:32px;background:linear-gradient(to right,#2cc20a,#1da303);z-index:21"></div>
<div class="abs" style="left:1759px;top:74px;width:145px;height:32px;background:#fff;border:1px solid #d8d8d8;z-index:21"></div>
<div class="t " style="left:1635px;top:34.5px;z-index:22;color:#222;font-size:14.05px">检测到该账号有新的密码<span style="position:relative;left:2.5px">，</span>是否更新<span style="margin-left:3px">？</span></div>
<div class="t  c" style="left:1678.5px;top:81px;z-index:22;color:#fff;font-size:12px;font-weight:500">更新密码</div>
<div class="t  c" style="left:1831.5px;top:81.3px;z-index:22;color:#333;font-size:12px">取消更新密码</div>
<svg style="left:1893px;top:11px;z-index:22" width="10" height="10" viewBox="0 0 10 10"><path d="M0.8 0.8L9.2 9.2M9.2 0.8L0.8 9.2" stroke="#333" stroke-width="1.9"/></svg>
<svg style="left:1683.4px;top:97.8px;z-index:30" width="13.5" height="21.2" viewBox="0 0 13 20" preserveAspectRatio="none"><path d="M1 1 V16 L4.6 12.6 L7.2 18.6 L9.6 17.6 L7 11.8 H12 Z" fill="#fff" stroke="#111" stroke-width="1" stroke-linejoin="round"/></svg>
</aside>
<footer>
<div class="abs" style="left:1830.5px;top:886.5px;width:48px;height:48px;border-radius:50%;background:#fff;box-shadow:0 0 5px rgba(120,140,200,.35);z-index:10"></div>
<div class="abs" style="left:1832px;top:888px;width:45px;height:45px;border-radius:50%;background:linear-gradient(200deg,#2f7cf6 0%,#4a9af9 70%,#6cc0fb 100%);z-index:11"></div>
<svg style="left:1832px;top:888px;z-index:12" width="45" height="45" viewBox="0 0 45 45"><path d="M25.6 6.4 Q28 6.8 29.6 7.9 M31.6 9 Q34.4 10.8 36 13" fill="none" stroke="#fff" stroke-width="1.1" opacity=".8" stroke-linecap="round"/><path d="M12 40.5 Q26 41 40 31 A22.5 22.5 0 0 1 12 40.5 Z" fill="#8fd6fb" opacity=".55"/></svg>
<div class="t  c" style="left:1853px;top:901px;z-index:12;color:#fff;font-size:13.4px">00:51</div>
<div class="t " style="left:1764.3px;top:909.6px;z-index:13;color:rgba(90,90,90,.78);font-size:15.15px">CSDN @wishCoding</div>
</footer>
</body></html>
